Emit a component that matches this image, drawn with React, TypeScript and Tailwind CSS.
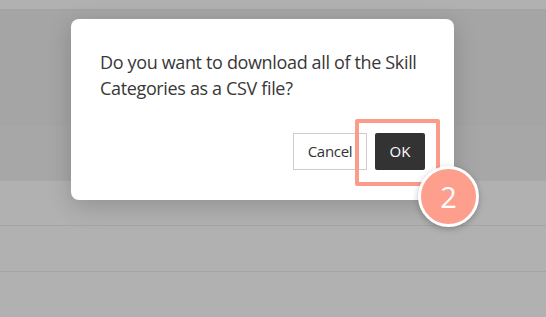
export default function App() {
  return (
    <div className="relative w-[546px] h-[317px] overflow-hidden bg-[#b1b1b1] font-['Open_Sans',sans-serif]">
      {/* page behind the overlay */}
      <div className="flex flex-col">
        <div className="h-[10px] bg-[#b1b1b1] border-b border-[#a2a2a2]" />
        <div className="h-[116px] bg-[#a5a5a5]" />
        <div className="h-[55px] bg-[#a7a7a7] border-b border-[#a9a9a9]" />
        <div className="h-[45px] border-b border-[#a5a5a5]" />
        <div className="h-[46px] border-b border-[#a5a5a5]" />
      </div>

      {/* dialog */}
      <div className="absolute left-[71px] top-[19px] w-[383px] h-[181px] bg-white rounded-lg shadow-[0_6px_24px_rgba(0,0,0,0.18)] px-[29px] pt-[30px]">
        <p className="w-[330px] text-[18px] tracking-[-0.35px] leading-[26px] text-[#383838]">
          Do you want to download all of the Skill Categories as a CSV file?
        </p>
        <div className="flex justify-end gap-2 mt-[32px]">
          <button className="w-[74px] h-[37px] border border-[#ccc] bg-white text-[15px] tracking-[-0.3px] text-[#333]">
            Cancel
          </button>
          <button className="w-[50px] h-[37px] bg-[#333] text-white text-[15px] rounded-[2px]">
            OK
          </button>
        </div>
      </div>

      {/* annotation */}
      <div className="absolute left-[355px] top-[119px] w-[85px] h-[67px] border-[4px] border-[#fd9b8b] rounded-[2px]" />
      <div className="absolute left-[418px] top-[166px] w-[61px] h-[61px] rounded-full bg-[#fe9e8c] border-[3px] border-white shadow-[0_2px_6px_rgba(0,0,0,0.25)] flex items-center justify-center text-white text-[29px] leading-none">
        2
      </div>
    </div>
  );
}
